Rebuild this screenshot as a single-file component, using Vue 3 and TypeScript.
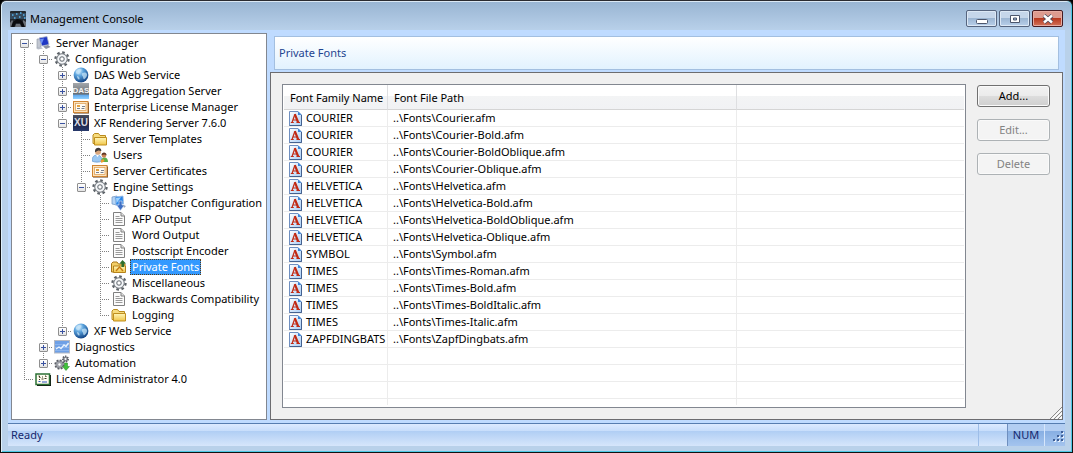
<script setup lang="ts">
type IconName =
  | 'computer' | 'gear' | 'globe' | 'das' | 'card' | 'xu' | 'folder' | 'users'
  | 'dispatch' | 'doc' | 'fontfolder' | 'chart' | 'gears' | 'license'

interface TreeNode {
  label: string
  icon: IconName
  open?: boolean
  children?: TreeNode[]
}

interface TreeRow {
  label: string
  icon: IconName
  depth: number
  guides: string[]
  expander: '' | 'plus' | 'minus'
}

interface FontEntry {
  family: string
  path: string
}

const selected = 'Private Fonts'

const tree: TreeNode[] = [
  {
    label: 'Server Manager', icon: 'computer', open: true, children: [
      {
        label: 'Configuration', icon: 'gear', open: true, children: [
          { label: 'DAS Web Service', icon: 'globe', open: false },
          { label: 'Data Aggregation Server', icon: 'das', open: false },
          { label: 'Enterprise License Manager', icon: 'card', open: false },
          {
            label: 'XF Rendering Server 7.6.0', icon: 'xu', open: true, children: [
              { label: 'Server Templates', icon: 'folder' },
              { label: 'Users', icon: 'users' },
              { label: 'Server Certificates', icon: 'card' },
              {
                label: 'Engine Settings', icon: 'gear', open: true, children: [
                  { label: 'Dispatcher Configuration', icon: 'dispatch' },
                  { label: 'AFP Output', icon: 'doc' },
                  { label: 'Word Output', icon: 'doc' },
                  { label: 'Postscript Encoder', icon: 'doc' },
                  { label: 'Private Fonts', icon: 'fontfolder' },
                  { label: 'Miscellaneous', icon: 'gear' },
                  { label: 'Backwards Compatibility', icon: 'doc' },
                  { label: 'Logging', icon: 'folder' },
                ],
              },
            ],
          },
          { label: 'XF Web Service', icon: 'globe', open: false },
        ],
      },
      { label: 'Diagnostics', icon: 'chart', open: false },
      { label: 'Automation', icon: 'gears', open: false },
    ],
  },
  { label: 'License Administrator 4.0', icon: 'license' },
]

function flatten(nodes: TreeNode[], depth: number, above: string[]): TreeRow[] {
  return nodes.flatMap((node, i) => {
    const last = i === nodes.length - 1
    const first = depth === 0 && i === 0
    const own = first ? 'first' : last ? 'end' : 'tee'
    const row: TreeRow = {
      label: node.label,
      icon: node.icon,
      depth,
      guides: [...above, own],
      expander: node.open === undefined ? '' : node.open ? 'minus' : 'plus',
    }
    const below = node.children ? flatten(node.children, depth + 1, [...above, last ? 'blank' : 'line']) : []
    return [row, ...below]
  })
}

const rows = flatten(tree, 0, [])

const fonts: FontEntry[] = [
  { family: 'COURIER', path: '..\\Fonts\\Courier.afm' },
  { family: 'COURIER', path: '..\\Fonts\\Courier-Bold.afm' },
  { family: 'COURIER', path: '..\\Fonts\\Courier-BoldOblique.afm' },
  { family: 'COURIER', path: '..\\Fonts\\Courier-Oblique.afm' },
  { family: 'HELVETICA', path: '..\\Fonts\\Helvetica.afm' },
  { family: 'HELVETICA', path: '..\\Fonts\\Helvetica-Bold.afm' },
  { family: 'HELVETICA', path: '..\\Fonts\\Helvetica-BoldOblique.afm' },
  { family: 'HELVETICA', path: '..\\Fonts\\Helvetica-Oblique.afm' },
  { family: 'SYMBOL', path: '..\\Fonts\\Symbol.afm' },
  { family: 'TIMES', path: '..\\Fonts\\Times-Roman.afm' },
  { family: 'TIMES', path: '..\\Fonts\\Times-Bold.afm' },
  { family: 'TIMES', path: '..\\Fonts\\Times-BoldItalic.afm' },
  { family: 'TIMES', path: '..\\Fonts\\Times-Italic.afm' },
  { family: 'ZAPFDINGBATS', path: '..\\Fonts\\ZapfDingbats.afm' },
]
</script>

<template>
  <div class="window">
    <svg class="defs" width="0" height="0" aria-hidden="true">
      <defs>
        <radialGradient id="gGlobe" cx="0.35" cy="0.25" r="0.8">
          <stop offset="0" stop-color="#d8f0ff" /><stop offset="0.4" stop-color="#5aa2dc" /><stop offset="1" stop-color="#0c3d80" />
        </radialGradient>
        <linearGradient id="gFolder" x1="0" y1="0" x2="0" y2="1">
          <stop offset="0" stop-color="#fff6b8" /><stop offset="1" stop-color="#f0c548" />
        </linearGradient>
        <linearGradient id="gXu" x1="0" y1="0" x2="0" y2="1">
          <stop offset="0" stop-color="#4c5160" /><stop offset="0.5" stop-color="#1b2140" /><stop offset="1" stop-color="#283a6c" />
        </linearGradient>
        <linearGradient id="gDas" x1="0" y1="0" x2="0" y2="1">
          <stop offset="0" stop-color="#a4a8ac" /><stop offset="0.7" stop-color="#666c72" /><stop offset="0.75" stop-color="#5fa8ec" /><stop offset="1" stop-color="#8fd0ff" />
        </linearGradient>
        <linearGradient id="gFont" x1="0" y1="0" x2="1" y2="1">
          <stop offset="0" stop-color="#ffffff" /><stop offset="1" stop-color="#a9cdf5" />
        </linearGradient>
        <symbol id="i-computer" viewBox="0 0 16 16">
          <path d="M2 4h4v8l-4 1z" fill="#c3c8d2" stroke="#8c93a3" stroke-width=".6" />
          <path d="M4 3l8-1.500 2 8-7 1.500z" fill="#1f37c4" stroke="#a9b3cc" stroke-width=".8" />
          <path d="M5 4l4-.6-2.500 5.800z" fill="#6f91f4" />
          <path d="M8 11.500l5-1.500 2.500 2-4.500 2z" fill="#8b91a0" />
          <path d="M1 13l5-1 2 1.500-5 1z" fill="#b9bec9" />
        </symbol>
        <symbol id="i-gear" viewBox="0 0 16 16">
          <circle cx="8" cy="8" r="6.600" fill="none" stroke="#5c6268" stroke-width="2.200" stroke-dasharray="2.600 2.580" />
          <circle cx="8" cy="8" r="5.300" fill="#d9dde3" stroke="#666c72" stroke-width=".9" />
          <circle cx="8" cy="8" r="3.700" fill="none" stroke="#f8f9fa" stroke-width="1.200" />
          <circle cx="8" cy="8" r="2.200" fill="#fff" stroke="#666c72" stroke-width="1" />
        </symbol>
        <symbol id="i-globe" viewBox="0 0 16 16">
          <circle cx="8" cy="8" r="7.400" fill="url(#gGlobe)" />
          <path d="M3 4c2-2.500 5-2.500 5.500-1.500S7 5 6.500 6.500 4 7 3 6zM9.500 6c2-1 4-.5 4.500 1s-1 4-2.500 5-1-2-2-3-1-2.500 0-3zM4 9c1.500 0 3 1.500 2.500 3S4 11.500 4 9z" fill="#c4e3f7" opacity=".75" />
        </symbol>
        <symbol id="i-das" viewBox="0 0 16 16">
          <rect width="16" height="16" fill="url(#gDas)" />
          <text x="8" y="10" text-anchor="middle" class="ico-das">DAS</text>
        </symbol>
        <symbol id="i-card" viewBox="0 0 16 16">
          <path d="M1 3.500h15v11H1z" fill="#5a3a20" />
          <rect x=".5" y="2.500" width="14.500" height="11" fill="#fbe3bd" stroke="#d08532" />
          <rect x="2.500" y="4.500" width="10.500" height="7" fill="#fffaf0" stroke="#dfa45c" stroke-width=".8" />
          <path d="M4 9.500h3M8.500 9.500h3M9 7.500h3" stroke="#77808c" />
          <path d="M4 6h3v2H4z" fill="#e2a13e" />
        </symbol>
        <symbol id="i-xu" viewBox="0 0 16 16">
          <rect width="16" height="16" fill="url(#gXu)" />
          <text x="8" y="11" text-anchor="middle" class="ico-xu">XU</text>
        </symbol>
        <symbol id="i-folder" viewBox="0 0 16 16">
          <path d="M1 12.500V4L2.500 2.500h4L8 4.500h5.500v8z" fill="#f7dc7d" stroke="#b98a1c" />
          <path d="M2.500 14V6.500h12V14z" fill="url(#gFolder)" stroke="#c08f1e" />
        </symbol>
        <symbol id="i-users" viewBox="0 0 16 16">
          <path d="M0 14c0-4 2-6 5-6s5 2 5 6c-2 1.500-8 1.500-10 0z" fill="#9cc8f2" stroke="#5b94cf" stroke-width=".7" />
          <path d="M4 8l1.500 2L7 8z" fill="#fff" />
          <circle cx="6" cy="4.800" r="3" fill="#dba77c" />
          <path d="M3 4.800C2.500 0 9 -.5 9.300 3.500c.2 1-1.800-.2-3.300.2S3.500 5.500 3 4.800z" fill="#3e3a3a" />
          <path d="M9 15c0-3 1.200-4.500 3.500-4.500S16 12 16 15z" fill="#5cb04a" />
          <path d="M8.500 13.500l3-1.500 1 2-3 2z" fill="#ee9a2c" />
          <circle cx="12" cy="8.500" r="2.200" fill="#c98254" />
          <path d="M9.500 8.300c0-3.600 5-3.800 5.100 0-1.500-1-3.300-1-5.100 0z" fill="#5b3424" />
        </symbol>
        <symbol id="i-dispatch" viewBox="0 0 16 16">
          <path d="M1 2l5-1v9l-5-1z" fill="#b6d5f5" stroke="#6b8fbe" stroke-width=".7" />
          <path d="M4 2l8-1 .5 8L5 10.500z" fill="#2c86e8" stroke="#9dbbe0" stroke-width=".8" />
          <path d="M5 3l5-.8-4.500 6z" fill="#9fd3ff" />
          <path d="M8 6h3v4h2.500l-4 5.500-4-5.500H8z" fill="#3f6fc4" stroke="#dbe8fa" stroke-width=".6" />
          <path d="M12 10l3 1-2 2z" fill="#9ba6b8" />
        </symbol>
        <symbol id="i-doc" viewBox="0 0 16 16">
          <path d="M2.500 1.500h7.500l3.500 3.500v9.500h-11z" fill="#fbfbfb" stroke="#808080" />
          <path d="M10 1.500V5h3.500" fill="#ddd" stroke="#808080" />
          <path d="M4.500 5.500h4M4.500 7.500h7M4.500 9.500h7M4.500 11.500h7" stroke="#9a9a9a" />
        </symbol>
        <symbol id="i-fontfolder" viewBox="0 0 16 16">
          <path d="M.5 13V4.500L2 3h4L7.500 5H14v8z" fill="#f3cf68" stroke="#a87718" />
          <path d="M2.500 13.500V7h12v6.500z" fill="url(#gFolder)" stroke="#b5831c" />
          <path d="M5 12l3.500-4 3.500 4" fill="none" stroke="#c47a12" stroke-width="1.400" />
          <path d="M8.500 4.500l3-3.500 3.500 3.500-2 .3V8h-2.500V4.800z" fill="#2f6f2b" />
        </symbol>
        <symbol id="i-chart" viewBox="0 0 16 16">
          <rect x=".5" y="1.500" width="15" height="12.500" fill="#6ea0e6" stroke="#b6bac4" />
          <path d="M1 5.500h14M1 8.500h14M1 11.500h14" stroke="#9dc0f0" stroke-width=".6" />
          <path d="M2 10l3-2 2 1.500L10 6l2 1.500L14.500 4" fill="none" stroke="#e8f3ff" stroke-width="1.300" />
        </symbol>
        <symbol id="i-gears" viewBox="0 0 16 16">
          <circle cx="5.500" cy="9.500" r="4" fill="#8d9096" stroke="#5b5e65" stroke-width="2.200" stroke-dasharray="1.800 1.300" />
          <circle cx="5.500" cy="9.500" r="3.300" fill="#9fa2a9" />
          <circle cx="5.500" cy="9.500" r="1.200" fill="#fff" />
          <circle cx="11.500" cy="4" r="2.600" fill="#8d9096" stroke="#5b5e65" stroke-width="1.800" stroke-dasharray="1.300 1" />
          <circle cx="11.500" cy="4" r=".9" fill="#fff" />
          <path d="M10.500 8h3v3.500h2L12 15.500 8.500 11.500h2z" fill="#3fc33a" stroke="#23851f" stroke-width=".5" />
        </symbol>
        <symbol id="i-license" viewBox="0 0 16 16">
          <path d="M2 4h14v11H2z" fill="#111" />
          <rect x="1" y="3" width="13.500" height="10.500" fill="#fffdf0" stroke="#2b7034" stroke-width="1.500" />
          <path d="M3.500 5h1v1.500h1M7 6h1M10 5h1v1M4 8.500h1M6.500 8h2M9.500 7.500h2" fill="none" stroke="#3c3820" />
          <path d="M7 11h5M3.500 10.500h2" stroke="#2f57c0" stroke-width="1.200" />
        </symbol>
        <symbol id="i-afm" viewBox="0 0 13 15">
          <path d="M.5.500H9L12.500 4v10.500H.5z" fill="url(#gFont)" stroke="#6f8fc0" />
          <path d="M12.500 4v10.500H.5" fill="none" stroke="#44618f" />
          <path d="M9 .5V4h3.500z" fill="#3c84d8" />
          <path d="M3 11.500L5.800 3.500M4 9h5" fill="none" stroke="#c22a14" stroke-width="1.200" />
          <path d="M5.800 3.200l3.400 8.300" fill="none" stroke="#c22a14" stroke-width="2.200" />
          <path d="M1.800 11.500h3M7.500 11.500H11" stroke="#c22a14" />
        </symbol>
      </defs>
    </svg>

    <header class="titlebar">
      <svg class="app-icon" viewBox="0 0 16 16" aria-hidden="true">
        <rect width="16" height="16" rx="1" fill="#23282e" />
        <path d="M0 2h16v6H0z" fill="#35495c" />
        <path d="M2 4h1.500M6 3h1.500M10 2h1.500M13 4h1.500M4 7h1.500M9 6h1.500M14 7h1.500" stroke="#57b4ee" stroke-width="1.400" />
        <path d="M1 16l2-5 4-3 4 1 4 5v2h-3l-2-4H6l-2 4z" fill="#0b0c0e" />
        <path d="M0 16v-4l2-3 1 1-2 6zM16 16v-5l-3-2v2l2 5zM5 16l1-3h4l1.500 3z" fill="#6d7278" />
      </svg>
      <h1 class="title">Management Console</h1>
      <div class="controls">
        <button class="ctl" type="button" aria-label="Minimize">
          <svg width="12" height="12" viewBox="0 0 12 12"><rect x=".5" y="6.500" width="11" height="4" rx="1" fill="#fff" stroke="#4c566c" /></svg>
        </button>
        <button class="ctl" type="button" aria-label="Maximize">
          <svg width="12" height="12" viewBox="0 0 12 12"><path d="M1.500 2.500h9v7h-9zM4.500 5v2h3V5z" fill="#fff" fill-rule="evenodd" stroke="#4c566c" /></svg>
        </button>
        <button class="ctl close" type="button" aria-label="Close">
          <svg width="12" height="12" viewBox="0 0 12 12"><path d="M2 2.500l8 7M10 2.500l-8 7" stroke="#4c4a5c" stroke-width="4.200" /><path d="M2 2.500l8 7M10 2.500l-8 7" stroke="#fff" stroke-width="2.400" /></svg>
        </button>
      </div>
    </header>

    <div class="client">
      <main class="panes">
        <nav class="tree-pane" aria-label="Console tree">
          <ul class="tree" role="tree">
            <li
              v-for="row in rows"
              :key="row.label"
              class="node"
              role="treeitem"
              :aria-level="row.depth + 1"
              :aria-selected="row.label === selected"
            >
              <span v-for="(g, i) in row.guides" :key="i" class="guide" :class="g">
                <button
                  v-if="i === row.depth && row.expander"
                  type="button"
                  class="expander"
                  :class="row.expander"
                  :aria-label="(row.expander === 'plus' ? 'Expand ' : 'Collapse ') + row.label"
                ></button>
              </span>
              <svg class="icon" aria-hidden="true"><use :href="'#i-' + row.icon" /></svg>
              <span class="label" :class="{ selected: row.label === selected }">{{ row.label }}</span>
            </li>
          </ul>
        </nav>

        <section class="detail">
          <h2 class="banner">Private Fonts</h2>
          <div class="content">
            <div class="list">
              <table class="fonts">
                <colgroup>
                  <col class="c-name" /><col class="c-path" /><col />
                </colgroup>
                <thead>
                  <tr><th scope="col">Font Family Name</th><th scope="col">Font File Path</th><th></th></tr>
                </thead>
                <tbody>
                  <tr v-for="f in fonts" :key="f.path">
                    <td>
                      <span class="family"><svg class="afm" aria-hidden="true"><use href="#i-afm" /></svg>{{ f.family }}</span>
                    </td>
                    <td>{{ f.path }}</td>
                    <td></td>
                  </tr>
                  <tr v-for="n in 3" :key="n"><td></td><td></td><td></td></tr>
                  <tr class="rest"><td></td><td></td><td></td></tr>
                </tbody>
              </table>
            </div>
            <div class="actions">
              <button class="btn" type="button">Add...</button>
              <button class="btn" type="button" disabled>Edit...</button>
              <button class="btn" type="button" disabled>Delete</button>
            </div>
            <svg class="grip" width="12" height="12" viewBox="0 0 12 12" aria-hidden="true">
              <path d="M0 12L12 0M4 12l8-8M8 12l4-4" stroke="#8a8a8a" fill="none" />
              <path d="M2 12L12 2M6 12l6-6M10 12l2-2" stroke="#fff" fill="none" />
            </svg>
          </div>
        </section>
      </main>

      <footer class="status">
        <span class="ready">Ready</span>
        <span class="cell"></span>
        <span class="num">NUM</span>
        <span class="corner">
          <svg width="12" height="12" viewBox="0 0 12 12" aria-hidden="true">
            <path d="M10 2h2v2h-2zM6 6h2v2H6zM10 6h2v2h-2zM2 10h2v2H2zM6 10h2v2H6zM10 10h2v2h-2z" fill="#e6f0fc" />
            <path d="M9 1h2v2H9zM5 5h2v2H5zM9 5h2v2H9zM1 9h2v2H1zM5 9h2v2H5zM9 9h2v2H9z" fill="#3f5f96" />
          </svg>
        </span>
      </footer>
    </div>
  </div>
</template>

<style>
html,
body {
  margin: 0;
  background: #000;
}
</style>

<style scoped>
.window {
  box-sizing: border-box;
  display: flex;
  flex-direction: column;
  min-height: 100vh;
  padding: 0 7px 6px;
  border: 1px solid #111;
  border-top-color: #2a2a30;
  border-radius: 6px 6px 0 0;
  background: linear-gradient(#98b4d2, #b9d1ea 30px);
  box-shadow: inset 1px 0 #dff0fa, inset -1px 0 #4cc8e4, inset 0 -1px #4cc8e4, inset 0 1px #dbe8f4;
  font-family: "Noto Sans", "Open Sans", sans-serif;
  font-size: 11px;
  line-height: 16px;
  color: #000;
}
.defs {
  position: absolute;
}
.titlebar {
  display: flex;
  align-items: center;
  height: 29px;
  padding: 0 2px;
}
.app-icon {
  width: 16px;
  height: 16px;
  margin-top: 6px;
}
.title {
  margin: 7px 0 0 4px;
  font-size: 11px;
  font-weight: 400;
}
.controls {
  display: flex;
  gap: 2px;
  align-self: flex-start;
  margin: 9px 0 0 auto;
}
.ctl {
  display: flex;
  align-items: center;
  justify-content: center;
  box-sizing: border-box;
  width: 31px;
  height: 17px;
  padding: 0;
  border: 1px solid #56657f;
  border-radius: 2px;
  background: linear-gradient(#c5d6ea 50%, #9cb6d3 50%, #b9d0ea);
  box-shadow: inset 0 0 0 1px #dce8f5;
}
.close {
  border-color: #451a20;
  background: linear-gradient(#dd9b8f 50%, #b8391f 50%, #d2735a);
  box-shadow: inset 0 0 0 1px #e6aca2;
}
.client {
  display: flex;
  flex: 1;
  flex-direction: column;
  background: #bfdbff;
}
.panes {
  display: flex;
  flex: 1;
  gap: 3px;
  padding: 3px 2px 3px 3px;
}
.tree-pane {
  box-sizing: border-box;
  flex: none;
  width: 256px;
  padding: 1px 0 0 3px;
  border: 1px solid #828790;
  background: #fff;
}
.tree {
  margin: 0;
  padding: 0;
  list-style: none;
}
.node {
  display: flex;
  align-items: center;
  height: 16px;
  white-space: nowrap;
}
.guide {
  position: relative;
  flex: none;
  width: 19px;
  height: 16px;
}
.guide::before {
  content: "";
  position: absolute;
  left: 9px;
  top: 0;
  width: 1px;
  height: 16px;
  background: repeating-linear-gradient(#808080 0 1px, transparent 1px 2px);
}
.guide.end::before {
  height: 9px;
}
.guide.first::before {
  top: 8px;
  height: 8px;
}
.guide.blank::before {
  display: none;
}
.guide.tee::after,
.guide.end::after,
.guide.first::after {
  content: "";
  position: absolute;
  left: 9px;
  top: 8px;
  width: 10px;
  height: 1px;
  background: repeating-linear-gradient(90deg, #808080 0 1px, transparent 1px 2px);
}
.expander {
  position: absolute;
  z-index: 1;
  left: 5px;
  top: 4px;
  box-sizing: border-box;
  width: 9px;
  height: 9px;
  padding: 0;
  border: 1px solid #8f8f8f;
  border-radius: 1px;
  background:
    linear-gradient(#3a52a0, #3a52a0) center / 5px 1px no-repeat,
    linear-gradient(#fff, #e4e4e4);
}
.expander.plus {
  background:
    linear-gradient(#3a52a0, #3a52a0) center / 5px 1px no-repeat,
    linear-gradient(#3a52a0, #3a52a0) center / 1px 5px no-repeat,
    linear-gradient(#fff, #e4e4e4);
}
.icon {
  flex: none;
  width: 16px;
  height: 16px;
  margin: 0 1px;
}
.label {
  margin-left: 2px;
  padding: 0 2px;
}
.label.selected {
  background: #3399ff;
  color: #fff;
  outline: 1px dotted #5a3a10;
  outline-offset: -1px;
}
.ico-das {
  font: 700 8px "Liberation Sans", sans-serif;
  fill: #f4f4f4;
}
.ico-xu {
  font: 700 10px "Liberation Sans", sans-serif;
  fill: #d9dbe2;
}
.detail {
  display: flex;
  flex: 1;
  flex-direction: column;
  min-width: 0;
}
.banner {
  box-sizing: border-box;
  height: 34px;
  margin: 3px 4px 2px;
  padding: 0 4px;
  border: 1px solid #a3bfe0;
  background: linear-gradient(#fff, #e2f2fe);
  color: #1f4590;
  font-size: 11px;
  font-weight: 400;
  line-height: 32px;
}
.content {
  position: relative;
  display: flex;
  flex: 1;
  gap: 11px;
  padding: 11px 12px 11px 11px;
  border: 1px solid #6c6c70;
  background: #f0f0f0;
}
.list {
  flex: 1;
  min-width: 0;
  padding: 0 1px 2px;
  border: 1px solid #828790;
  background: #fff;
}
.fonts {
  width: 100%;
  height: 100%;
  table-layout: fixed;
  border-spacing: 0;
}
.c-name {
  width: 104px;
}
.c-path {
  width: 349px;
}
.fonts th {
  height: 25px;
  padding: 2px 6px 0;
  box-sizing: border-box;
  border-right: 1px solid #dedfe1;
  border-bottom: 1px solid #d5d5d5;
  background: linear-gradient(#fff 45%, #f3f4f5 45%, #f1f2f4);
  font-weight: 400;
  text-align: left;
  white-space: nowrap;
}
.fonts td {
  box-sizing: border-box;
  height: 17px;
  padding: 0 5px;
  border-right: 1px solid #ececec;
  border-bottom: 1px solid #ececec;
  line-height: 16px;
  white-space: nowrap;
}
.fonts th:last-child,
.fonts td:last-child {
  border-right: 0;
}
.fonts .rest td {
  height: auto;
  border-bottom: 0;
}
.family {
  display: flex;
  align-items: center;
  gap: 4px;
}
.afm {
  flex: none;
  width: 13px;
  height: 15px;
}
.actions {
  display: flex;
  flex: none;
  flex-direction: column;
  gap: 12px;
  width: 73px;
  padding-top: 1px;
}
.btn {
  box-sizing: border-box;
  width: 100%;
  height: 22px;
  padding: 0;
  border: 1px solid #707070;
  border-radius: 3px;
  background: linear-gradient(#f2f2f2, #ebebeb 50%, #dddddd 50%, #cfcfcf);
  box-shadow: inset 0 0 0 1px #fafafa;
  color: #000;
  font: inherit;
}
.btn:disabled {
  border-color: #adb2b5;
  background: #f4f4f4;
  color: #838383;
}
.grip {
  position: absolute;
  right: 0;
  bottom: 0;
}
.status {
  display: flex;
  align-items: stretch;
  height: 22px;
  border-top: 1px solid #567db0;
  background: linear-gradient(#dceaff, #c8defb 30%, #afcdf4 30%, #d6e6fb);
  color: #15286e;
  line-height: 22px;
}
.ready {
  flex: 1;
  padding-left: 3px;
}
.cell {
  width: 28px;
  border-left: 1px solid #9dbde8;
}
.num {
  box-sizing: border-box;
  width: 37px;
  border-left: 1px solid #6f8fbf;
  background: linear-gradient(#b3cef2 30%, #86aee2 30%, #a4c4ee);
  text-align: center;
}
.corner {
  display: flex;
  align-items: flex-end;
  justify-content: flex-end;
  box-sizing: border-box;
  width: 21px;
  padding: 0 1px 4px 0;
  border-left: 1px solid #d6e6fb;
  background: linear-gradient(#b3cef2 30%, #86aee2 30%, #a4c4ee);
}
</style>
